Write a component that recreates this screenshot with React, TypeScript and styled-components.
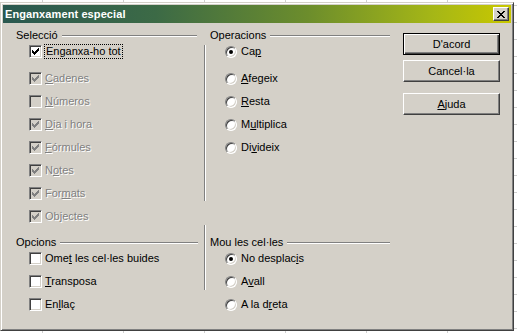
import React from 'react';
import styled, { createGlobalStyle } from 'styled-components';

const GlobalStyle = createGlobalStyle`
  html, body {
    margin: 0;
    padding: 0;
  }
  body {
    width: 517px;
    height: 333px;
    overflow: hidden;
    background-color: #fff;
    background-image:
      linear-gradient(to right, #cfcfcf 1px, transparent 1px),
      linear-gradient(to bottom, #cfcfcf 1px, transparent 1px);
    background-size: 81px 17px;
    background-position: 42px 0, 0 5px;
    font-family: 'Liberation Sans', Arial, sans-serif;
    font-size: 11px;
    color: #000;
  }
`;

const Window = styled.div`
  box-sizing: border-box;
  width: 514px;
  height: 329px;
  margin-top: 2px;
  padding: 2px;
  background: #d4d0c8;
  border: 1px solid;
  border-color: #d4d0c8 #404040 #404040 #d4d0c8;
  box-shadow: inset 1px 1px #fff, inset -1px -1px #808080;
  display: flex;
  flex-direction: column;
`;

const TitleBar = styled.div`
  height: 18px;
  flex: none;
  display: flex;
  align-items: center;
  padding: 0 2px;
  background: linear-gradient(to right, #2a5850 0%, #3c6a46 30%, #6c8d2c 60%, #a6b716 85%, #c9c800 100%);
`;

const Title = styled.div`
  flex: 1;
  color: #fff;
  font-weight: bold;
  font-size: 11px;
  letter-spacing: 0.1px;
`;

const CloseButton = styled.div`
  box-sizing: border-box;
  width: 16px;
  height: 14px;
  background: #d4d0c8;
  border: 1px solid;
  border-color: #fff #404040 #404040 #fff;
  box-shadow: inset -1px -1px #808080;
  display: flex;
  align-items: center;
  justify-content: center;
`;

const Body = styled.div`
  flex: 1;
  display: flex;
  align-items: flex-start;
  padding: 6px 0 0 13px;
`;

const Panels = styled.div`
  display: grid;
  grid-template-columns: 188px 2px 185px;
  grid-template-rows: 196px 88px;
  align-items: start;
`;

const VRule = styled.div<{ $top: number; $height: number }>`
  width: 1px;
  height: ${(p) => p.$height}px;
  background: #808080;
  box-shadow: 1px 0 #fff;
  margin-top: ${(p) => p.$top}px;
`;

const Group = styled.div<{ $top?: number; $left?: number }>`
  display: flex;
  flex-direction: column;
  padding-top: ${(p) => p.$top ?? 0}px;
  padding-left: ${(p) => p.$left ?? 0}px;
`;

const Header = styled.div<{ $end: number }>`
  display: flex;
  align-items: center;
  height: 13px;
  line-height: 13px;
  white-space: nowrap;
  &::after {
    content: '';
    flex: 1;
    height: 0;
    margin-left: 4px;
    margin-right: ${(p) => p.$end}px;
    border-top: 1px solid #808080;
    border-bottom: 1px solid #fff;
  }
`;

const List = styled.div<{ $indent: number }>`
  display: flex;
  flex-direction: column;
  gap: 6px;
  margin-top: 1px;
  padding-left: ${(p) => p.$indent}px;
`;

const Row = styled.div<{ $extra?: number }>`
  height: 17px;
  display: flex;
  align-items: center;
  margin-bottom: ${(p) => p.$extra ?? 0}px;
`;

const Box = styled.span<{ $disabled?: boolean }>`
  box-sizing: border-box;
  width: 13px;
  height: 13px;
  flex: none;
  border: 1px solid;
  border-color: #808080 #fff #fff #808080;
  box-shadow: inset 1px 1px #404040, inset -1px -1px #d4d0c8;
  background: ${(p) => (p.$disabled ? '#d4d0c8' : '#fff')};
  display: flex;
  align-items: center;
  justify-content: center;
`;

const Round = styled.span`
  box-sizing: border-box;
  width: 12px;
  height: 12px;
  flex: none;
  border-radius: 50%;
  border: 1px solid;
  border-color: #808080 #fff #fff #808080;
  box-shadow: inset 1px 1px #404040, inset -1px -1px #d4d0c8;
  background: #fff;
  display: flex;
  align-items: center;
  justify-content: center;
`;

const Dot = styled.span`
  width: 4px;
  height: 4px;
  border-radius: 50%;
  background: #000;
`;

const Label = styled.span<{ $disabled?: boolean; $gap: number; $focus?: boolean }>`
  margin-left: ${(p) => p.$gap}px;
  color: ${(p) => (p.$disabled ? '#808080' : '#000')};
  text-shadow: ${(p) => (p.$disabled ? '1px 1px #fff' : 'none')};
  outline: ${(p) => (p.$focus ? '1px dotted #000' : 'none')};
  padding: ${(p) => (p.$focus ? '0 1px' : '0')};
  line-height: 13px;
  white-space: nowrap;
`;

const ButtonColumn = styled.div`
  display: flex;
  flex-direction: column;
  gap: 5px;
  margin-top: 4px;
  margin-left: 12px;
`;

const Button = styled.div<{ $primary?: boolean; $space?: number }>`
  box-sizing: border-box;
  width: 97px;
  height: 22px;
  margin-top: ${(p) => p.$space ?? 0}px;
  background: #d4d0c8;
  border: 1px solid;
  border-color: ${(p) => (p.$primary ? '#000' : '#fff #404040 #404040 #fff')};
  box-shadow: ${(p) =>
    p.$primary
      ? 'inset 1px 1px #fff, inset -1px -1px #404040, inset -2px -2px #808080'
      : 'inset -1px -1px #808080'};
  display: flex;
  align-items: center;
  justify-content: center;
`;

const Check = ({ color }: { color: string }) => (
  <svg width="7" height="7" viewBox="0 0 7 7">
    <path d="M0 2h1v1h1v1h1V3h1V2h1V1h1V0h1v3H6v1H5v1H4v1H3v1H2V6H1V5H0z" fill={color} />
  </svg>
);

type Opt = { text: React.ReactNode; checked?: boolean; disabled?: boolean; focus?: boolean };

const CheckList = ({ items, first }: { items: Opt[]; first?: number }) => (
  <List $indent={13}>
    {items.map((it, i) => (
      <Row key={i} $extra={i === 0 ? first : 0}>
        <Box $disabled={it.disabled}>{it.checked && <Check color={it.disabled ? '#808080' : '#000'} />}</Box>
        <Label $gap={3} $disabled={it.disabled} $focus={it.focus}>
          {it.text}
        </Label>
      </Row>
    ))}
  </List>
);

const RadioList = ({ items, first }: { items: Opt[]; first?: number }) => (
  <List $indent={15}>
    {items.map((it, i) => (
      <Row key={i} $extra={i === 0 ? first : 0}>
        <Round>{it.checked && <Dot />}</Round>
        <Label $gap={4}>{it.text}</Label>
      </Row>
    ))}
  </List>
);

const selection: Opt[] = [
  { text: 'Enganxa-ho tot', checked: true, focus: true },
  { text: <><u>C</u>adenes</>, checked: true, disabled: true },
  { text: <><u>N</u>úmeros</>, disabled: true },
  { text: <><u>D</u>ia i hora</>, checked: true, disabled: true },
  { text: <><u>F</u>órmules</>, checked: true, disabled: true },
  { text: <>N<u>o</u>tes</>, checked: true, disabled: true },
  { text: <>For<u>m</u>ats</>, checked: true, disabled: true },
  { text: <>Ob<u>j</u>ectes</>, checked: true, disabled: true },
];

const operations: Opt[] = [
  { text: <>Ca<u>p</u></>, checked: true },
  { text: <><u>A</u>fegeix</> },
  { text: <><u>R</u>esta</> },
  { text: <>M<u>u</u>ltiplica</> },
  { text: <>Di<u>v</u>ideix</> },
];

const options: Opt[] = [
  { text: <>Ome<u>t</u> les cel·les buides</> },
  { text: <><u>T</u>ransposa</> },
  { text: <>En<u>l</u>laç</> },
];

const shift: Opt[] = [
  { text: <>No desplac<u>i</u>s</>, checked: true },
  { text: <>A<u>v</u>all</> },
  { text: <>A la d<u>r</u>eta</> },
];

const App: React.FC = () => (
  <>
    <GlobalStyle />
    <Window>
      <TitleBar>
        <Title>Enganxament especial</Title>
        <CloseButton>
          <svg width="8" height="7" viewBox="0 0 8 7">
            <path d="M0 0h2v1h1v1h2V1h1V0h2v1H7v1H6v1H5v1h1v1h1v1h1v1H6V6H5V5H3v1H2v1H0V6h1V5h1V4h1V3H2V2H1V1H0z" fill="#000" />
          </svg>
        </CloseButton>
      </TitleBar>
      <Body>
        <Panels>
          <Group>
            <Header $end={7}>Selecció</Header>
            <CheckList items={selection} first={4} />
          </Group>
          <VRule $top={16} $height={156} />
          <Group $left={4}>
            <Header $end={1}>Operacions</Header>
            <RadioList items={operations} first={4} />
          </Group>
          <Group $top={11}>
            <Header $end={6}>Opcions</Header>
            <CheckList items={options} />
          </Group>
          <VRule $top={0} $height={65} />
          <Group $top={11} $left={4}>
            <Header $end={1}>Mou les cel·les</Header>
            <RadioList items={shift} />
          </Group>
        </Panels>
        <ButtonColumn>
          <Button $primary>D'acord</Button>
          <Button>Cancel·la</Button>
          <Button $space={6}>
            <span>
              <u>A</u>juda
            </span>
          </Button>
        </ButtonColumn>
      </Body>
    </Window>
  </>
);

export default App;
